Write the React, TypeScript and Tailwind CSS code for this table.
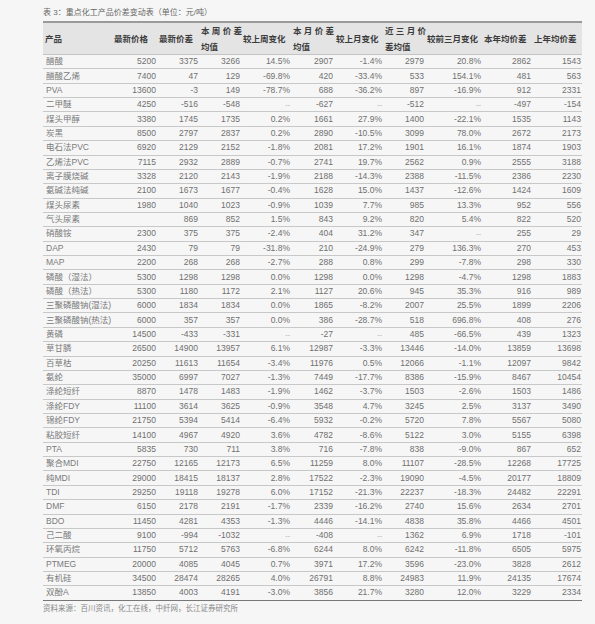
const rows: string[][] = [
  ["醋酸", "5200", "3375", "3266", "14.5%", "2907", "-1.4%", "2979", "20.8%", "2862", "1543"],
  ["醋酸乙烯", "7400", "47", "129", "-69.8%", "420", "-33.4%", "533", "154.1%", "481", "563"],
  ["PVA", "13600", "-3", "149", "-78.7%", "688", "-36.2%", "897", "-16.9%", "912", "2331"],
  ["二甲醚", "4250", "-516", "-548", "--", "-627", "--", "-512", "--", "-497", "-154"],
  ["煤头甲醇", "3380", "1745", "1735", "0.2%", "1661", "27.9%", "1400", "-22.1%", "1535", "1143"],
  ["炭黑", "8500", "2797", "2837", "0.2%", "2890", "-10.5%", "3099", "78.0%", "2672", "2173"],
  ["电石法PVC", "6920", "2129", "2152", "-1.8%", "2081", "17.2%", "1901", "16.1%", "1874", "1903"],
  ["乙烯法PVC", "7115", "2932", "2889", "-0.7%", "2741", "19.7%", "2562", "0.9%", "2555", "3188"],
  ["离子膜烧碱", "3328", "2120", "2143", "-1.9%", "2188", "-14.3%", "2388", "-11.5%", "2386", "2230"],
  ["氨碱法纯碱", "2100", "1673", "1677", "-0.4%", "1628", "15.0%", "1437", "-12.6%", "1424", "1609"],
  ["煤头尿素", "1980", "1040", "1023", "-0.9%", "1039", "7.7%", "985", "13.3%", "952", "556"],
  ["气头尿素", "", "869", "852", "1.5%", "843", "9.2%", "820", "5.4%", "822", "520"],
  ["硝酸铵", "2300", "375", "375", "-2.4%", "404", "31.2%", "347", "--", "255", "29"],
  ["DAP", "2430", "79", "79", "-31.8%", "210", "-24.9%", "279", "136.3%", "270", "453"],
  ["MAP", "2200", "268", "268", "-2.7%", "288", "0.8%", "299", "-7.8%", "298", "330"],
  ["磷酸（湿法）", "5300", "1298", "1298", "0.0%", "1298", "0.0%", "1298", "-4.7%", "1298", "1883"],
  ["磷酸（热法）", "5300", "1180", "1172", "2.1%", "1127", "20.6%", "945", "35.3%", "916", "989"],
  ["三聚磷酸钠(湿法)", "6000", "1834", "1834", "0.0%", "1865", "-8.2%", "2007", "25.5%", "1899", "2206"],
  ["三聚磷酸钠(热法)", "6000", "357", "357", "0.0%", "386", "-28.7%", "518", "696.8%", "408", "276"],
  ["黄磷", "14500", "-433", "-331", "--", "-27", "--", "485", "-66.5%", "439", "1323"],
  ["草甘膦", "26500", "14900", "13957", "6.1%", "12987", "-3.3%", "13446", "-14.0%", "13859", "13698"],
  ["百草枯", "20250", "11613", "11654", "-3.4%", "11976", "0.5%", "12066", "-1.1%", "12097", "9842"],
  ["氨纶", "35000", "6997", "7027", "-1.3%", "7449", "-17.7%", "8386", "-15.9%", "8467", "10454"],
  ["涤纶短纤", "8870", "1478", "1483", "-1.9%", "1462", "-3.7%", "1503", "-2.6%", "1503", "1486"],
  ["涤纶FDY", "11100", "3614", "3625", "-0.9%", "3548", "4.7%", "3245", "2.5%", "3137", "3490"],
  ["锦纶FDY", "21750", "5394", "5414", "-6.4%", "5932", "-0.2%", "5720", "7.8%", "5567", "5080"],
  ["粘胶短纤", "14100", "4967", "4920", "3.6%", "4782", "-8.6%", "5122", "3.0%", "5155", "6398"],
  ["PTA", "5835", "730", "711", "3.8%", "716", "-7.8%", "838", "-9.0%", "867", "652"],
  ["聚合MDI", "22750", "12165", "12173", "6.5%", "11259", "8.0%", "11107", "-28.5%", "12268", "17725"],
  ["纯MDI", "29000", "18415", "18137", "2.8%", "17522", "-2.3%", "19090", "-4.5%", "20177", "18809"],
  ["TDI", "29250", "19118", "19278", "6.0%", "17152", "-21.3%", "22237", "-18.3%", "24482", "22291"],
  ["DMF", "6150", "2178", "2191", "-1.7%", "2339", "-16.2%", "2740", "15.6%", "2634", "2701"],
  ["BDO", "11450", "4281", "4353", "-1.3%", "4446", "-14.1%", "4838", "35.8%", "4466", "4501"],
  ["己二酸", "9100", "-994", "-1032", "--", "-408", "--", "1362", "6.9%", "1718", "-101"],
  ["环氧丙烷", "11750", "5712", "5763", "-6.8%", "6244", "8.0%", "6242", "-11.8%", "6505", "5975"],
  ["PTMEG", "20000", "4085", "4045", "0.7%", "3971", "17.2%", "3596", "-23.0%", "3828", "2612"],
  ["有机硅", "34500", "28474", "28265", "4.0%", "26791", "8.8%", "24983", "11.9%", "24135", "17674"],
  ["双酚A", "13850", "4003", "4191", "-3.0%", "3856", "21.7%", "3280", "12.0%", "3229", "2334"],
]

// [line1, line2?]
const headers: [string, string?][] = [
  ["产品"],
  ["最新价格"],
  ["最新价差"],
  ["本 周 价 差", "均值"],
  ["较上周变化"],
  ["本 月 价 差", "均值"],
  ["较上月变化"],
  ["近 三 月 价", "差均值"],
  ["较前三月变化"],
  ["本年均价差"],
  ["上年均价差"],
]

const cols = "grid grid-cols-[69px_45px_42px_42px_50px_43px_49px_42px_57px_50px_50px]"

export default function App() {
  return (
    <div
      className="min-h-screen w-[595px] bg-[#f6f6f6] pl-[43px] pt-[7px]"
      style={{ fontFamily: '"Liberation Sans", "Noto Sans CJK SC", sans-serif' }}
    >
      <div className="h-[12px] mb-[2px] text-[8px] leading-[12px] text-[#666]">
        表 3：重点化工产品价差变动表（单位：元/吨）
      </div>

      <div className="w-[539px]">
        {/* header */}
        <div className={`${cols} h-[34px] border-t-2 border-[#9a9a9a] bg-[#e4e4e4] border-b border-b-[#c4c4c4]`}>
          {headers.map(([a, b], i) => (
            <div
              key={i}
              className="flex flex-col justify-center pl-[2px] text-[8.5px] font-bold text-[#3c3c3c] leading-[16px]"
            >
              <span className="whitespace-nowrap">{a}</span>
              {b && <span className="whitespace-nowrap">{b}</span>}
            </div>
          ))}
        </div>

        {/* body */}
        {rows.map((r, i) => (
          <div
            key={i}
            className={`${cols} h-[14.37px] border-b ${
              i === rows.length - 1 ? "border-[#777]" : "border-[#c8c8c8]"
            } text-[8.5px] leading-[13px] text-[#707070]`}
          >
            {r.map((c, j) =>
              j === 0 ? (
                <div key={j} className="pl-[3px] whitespace-nowrap flex items-center text-[#7a7a7a]">
                  {c}
                </div>
              ) : (
                <div
                  key={j}
                  className={`flex items-center justify-end pr-[1px] whitespace-nowrap ${
                    c === "--" ? "text-[#aaa] text-[7px]" : ""
                  }`}
                >
                  {c}
                </div>
              )
            )}
          </div>
        ))}
      </div>

      <div className="mt-[2px] text-[7.5px] leading-[11px] text-[#888]">
        资料来源：百川资讯，化工在线，中纤网，长江证券研究所
      </div>
    </div>
  )
}
